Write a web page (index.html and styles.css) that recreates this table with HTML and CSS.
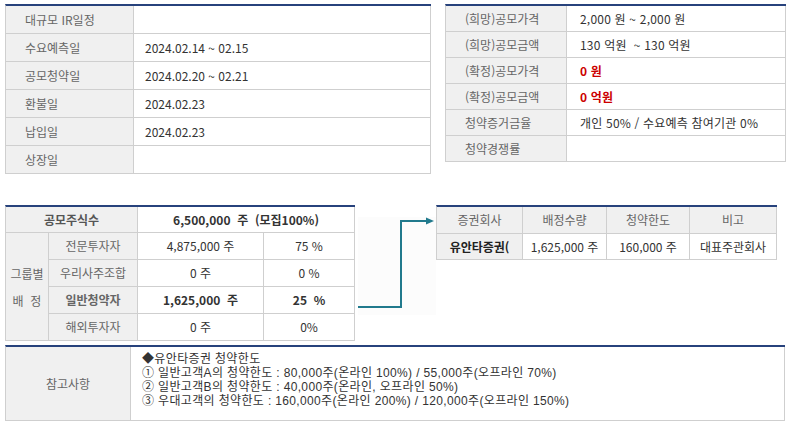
FILE: index.html
```html
<!DOCTYPE html>
<html lang="ko">
<head>
<meta charset="utf-8">
<title>공모 정보</title>
<link rel="stylesheet" href="styles.css">
</head>
<body>
<div class="page">
  <div class="top">
    <table class="tbl tbl-sched">
      <colgroup><col class="c-s1"><col class="c-s2"></colgroup>
      <tr><th>대규모 IR일정</th><td></td></tr>
      <tr><th>수요예측일</th><td>2024.02.14 ~ 02.15</td></tr>
      <tr><th>공모청약일</th><td>2024.02.20 ~ 02.21</td></tr>
      <tr><th>환불일</th><td>2024.02.23</td></tr>
      <tr><th>납입일</th><td>2024.02.23</td></tr>
      <tr><th>상장일</th><td></td></tr>
    </table>
    <table class="tbl tbl-price">
      <colgroup><col class="c-p1"><col class="c-p2"></colgroup>
      <tr><th>(희망)공모가격</th><td>2,000 원 ~ 2,000 원</td></tr>
      <tr><th>(희망)공모금액</th><td>130 억원 &nbsp;~ 130 억원</td></tr>
      <tr><th>(확정)공모가격</th><td><span class="red">0 원</span></td></tr>
      <tr><th>(확정)공모금액</th><td><span class="red">0 억원</span></td></tr>
      <tr><th>청약증거금율</th><td>개인 50% / 수요예측 참여기관 0%</td></tr>
      <tr><th>청약경쟁률</th><td></td></tr>
    </table>
  </div>

  <div class="mid">
    <table class="tbl tbl-alloc">
      <colgroup><col class="c-a1"><col class="c-a2"><col class="c-a3"><col class="c-a4"></colgroup>
      <tr class="head"><th colspan="2" class="b">공모주식수</th><td colspan="2" class="b">6,500,000 &nbsp;주 &nbsp;(모집100%)</td></tr>
      <tr><th rowspan="4" class="grp">그룹별<br>배 &nbsp;정</th><th>전문투자자</th><td>4,875,000 주</td><td>75 %</td></tr>
      <tr><th>우리사주조합</th><td>0 주</td><td>0 %</td></tr>
      <tr><th class="b">일반청약자</th><td class="b">1,625,000 &nbsp;주</td><td class="b">25 &nbsp;%</td></tr>
      <tr><th>해외투자자</th><td>0 주</td><td>0%</td></tr>
    </table>
    <svg class="connector" width="80" height="135" viewBox="0 0 80 135">
      <rect x="2" y="12" width="78" height="98" fill="#fcfcfc"/>
      <polyline points="2,102 45,102 45,16 72,16" fill="none" stroke="#217a8d" stroke-width="2"/>
      <polygon points="70,12.5 78,16 70,19.5" fill="#217a8d"/>
    </svg>
    <table class="tbl tbl-broker">
      <colgroup><col class="c-b1"><col class="c-b2"><col class="c-b3"><col class="c-b4"></colgroup>
      <tr class="head"><th>증권회사</th><th>배정수량</th><th>청약한도</th><th>비고</th></tr>
      <tr class="body"><th class="b dark">유안타증권(</th><td>1,625,000 주</td><td>160,000 주</td><td>대표주관회사</td></tr>
    </table>
  </div>

  <table class="tbl tbl-note">
    <colgroup><col class="c-n1"><col class="c-n2"></colgroup>
    <tr>
      <th>참고사항</th>
      <td>
        <div>◆유안타증권 청약한도</div>
        <div>① 일반고객A의 청약한도 : 80,000주(온라인 100%) / 55,000주(오프라인 70%)</div>
        <div>② 일반고객B의 청약한도 : 40,000주(온라인, 오프라인 50%)</div>
        <div>③ 우대고객의 청약한도 : 160,000주(온라인 200%) / 120,000주(오프라인 150%)</div>
      </td>
    </tr>
  </table>
</div>
</body>
</html>
```

FILE: styles.css
```css
html, body {
  margin: 0;
  padding: 0;
  background: #ffffff;
}

body {
  font-family: "Noto Sans CJK KR", "Noto Sans", sans-serif;
  font-size: 12px;
  color: #333333;
}

.page {
  padding: 4px 0 0 5px;
}

.tbl {
  border-collapse: separate;
  border-spacing: 0;
  table-layout: fixed;
  border-top: 2px solid #27427c;
  border-left: 1px solid #cfcfcf;
}

.tbl th,
.tbl td {
  box-sizing: border-box;
  border-right: 1px solid #cfcfcf;
  border-bottom: 1px solid #cfcfcf;
  font-weight: normal;
  line-height: 15px;
  white-space: nowrap;
  overflow: hidden;
}

.tbl th {
  background: #f0f0f0;
  color: #666666;
}

.tbl td {
  color: #333333;
}

.b {
  font-weight: bold !important;
}

.red {
  color: #cc0000;
  font-weight: bold;
}

/* top section */
.top {
  display: flex;
  align-items: flex-start;
  gap: 14px;
}

.tbl-sched {
  width: 426px;
}
.c-s1 { width: 128px; }
.c-s2 { width: 297px; }
.tbl-sched th,
.tbl-sched td {
  text-align: left;
  padding: 6px 0;
}
.tbl-sched th { padding-left: 19px; }
.tbl-sched td { padding-left: 11px; }

.tbl-price {
  width: 341px;
}
.c-p1 { width: 121px; }
.c-p2 { width: 219px; }
.tbl-price th,
.tbl-price td {
  text-align: left;
  padding: 5px 0;
}
.tbl-price th { padding-left: 19px; }
.tbl-price td { padding-left: 13px; letter-spacing: 0.2px; }

/* middle section */
.mid {
  display: flex;
  align-items: flex-start;
  margin-top: 31px;
}

.tbl-alloc {
  width: 350px;
}
.c-a1 { width: 43px; }
.c-a2 { width: 89px; }
.c-a3 { width: 126px; }
.c-a4 { width: 91px; }
.tbl-alloc th,
.tbl-alloc td {
  text-align: center;
  padding: 5px 0 6px;
}
.tbl-alloc .head th,
.tbl-alloc .head td {
  padding: 5px 0;
}
.tbl-alloc .head th {
  color: #555555;
}
.tbl-alloc th.grp {
  line-height: 27px;
  padding: 0;
}

.connector {
  display: block;
  flex: none;
  margin-left: 1px;
}

.tbl-broker {
  width: 341px;
}
.c-b1 { width: 86px; }
.c-b2 { width: 84px; }
.c-b3 { width: 83px; }
.c-b4 { width: 87px; }
.tbl-broker th,
.tbl-broker td {
  text-align: center;
}
.tbl-broker .head th {
  padding: 5px 0 6px;
}
.tbl-broker .body th,
.tbl-broker .body td {
  padding: 5px 0;
}
.tbl-broker th.dark {
  color: #222222;
}

/* bottom note */
.tbl-note {
  width: 780px;
  margin-top: 4px;
}
.c-n1 { width: 125px; }
.c-n2 { width: 654px; }
.tbl-note th {
  text-align: center;
  vertical-align: middle;
  padding: 0;
}
.tbl-note td {
  font-family: "Liberation Sans", "Noto Sans CJK KR", sans-serif;
  text-align: left;
  padding: 5px 11px 12px;
  line-height: 14px;
  letter-spacing: 0.35px;
  color: #333333;
}
```
